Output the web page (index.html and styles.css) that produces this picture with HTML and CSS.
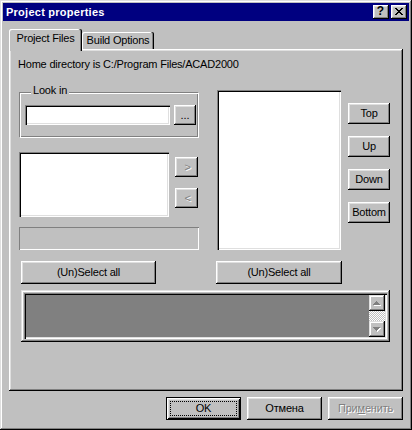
FILE: index.html
```html
<!DOCTYPE html>
<html lang="en">
<head>
<meta charset="utf-8">
<title>Project properties</title>
<link rel="stylesheet" href="styles.css">
</head>
<body>
<div class="window">
  <div class="titlebar">
    <span class="title">Project properties</span>
    <div class="caption-buttons">
      <span class="cap-btn help">?</span>
      <span class="cap-btn close">
        <svg width="8" height="7" viewBox="0 0 8 7" shape-rendering="crispEdges"><path fill="#000" d="M0 0h2v1H0zM6 0h2v1H6zM1 1h2v1H1zM5 1h2v1H5zM2 2h4v1H2zM3 3h2v1H3zM2 4h4v1H2zM1 5h2v1H1zM5 5h2v1H5zM0 6h2v1H0zM6 6h2v1H6z"/></svg>
      </span>
    </div>
  </div>

  <div class="body">
    <div class="tabs">
      <div class="tab active">Project Files</div>
      <div class="tab">Build Options</div>
    </div>

    <div class="panel">
      <div class="home">Home directory is C:/Program Files/ACAD2000</div>

      <div class="cols">
        <div class="col-left">
          <fieldset class="group">
            <legend>Look in</legend>
            <div class="look-row">
              <div class="field edit"></div>
              <button type="button" class="btn browse">...</button>
            </div>
          </fieldset>

          <div class="list-row">
            <div class="field list-left"></div>
            <div class="arrows">
              <button type="button" class="btn arrow disabled">&gt;</button>
              <button type="button" class="btn arrow disabled">&lt;</button>
            </div>
          </div>

          <div class="status"></div>

          <button type="button" class="btn select select-left">(Un)Select all</button>
        </div>

        <div class="col-right">
          <div class="list-wrap">
            <div class="field list-right"></div>
            <div class="order">
              <button type="button" class="btn order-btn">Top</button>
              <button type="button" class="btn order-btn">Up</button>
              <button type="button" class="btn order-btn">Down</button>
              <button type="button" class="btn order-btn">Bottom</button>
            </div>
          </div>
          <button type="button" class="btn select select-right">(Un)Select all</button>
        </div>
      </div>

      <div class="log">
        <div class="log-inner">
          <div class="scrollbar">
            <div class="sb-btn">
              <svg width="8" height="5" viewBox="0 0 8 5" shape-rendering="crispEdges">
                <path fill="#fff" d="M4 1h1v1h1v1h1v1h1v1H1V4h1V3h1V2h1z"/>
                <path fill="#808080" d="M3 0h1v1h1v1h1v1h1v1H0V3h1V2h1V1h1z"/>
              </svg>
            </div>
            <div class="sb-track"></div>
            <div class="sb-btn">
              <svg width="8" height="5" viewBox="0 0 8 5" shape-rendering="crispEdges">
                <path fill="#fff" d="M1 1h7v1H7v1H6v1H5v1H4V4H3V3H2V2H1z"/>
                <path fill="#808080" d="M0 0h7v1H6v1H5v1H4v1H3V3H2V2H1V1H0z"/>
              </svg>
            </div>
          </div>
        </div>
      </div>
    </div>

    <div class="actions">
      <button type="button" class="btn default"><span class="focus">OK</span></button>
      <button type="button" class="btn action">Отмена</button>
      <button type="button" class="btn action disabled">При<u>м</u>енить</button>
    </div>
  </div>
</div>
</body>
</html>
```

FILE: styles.css
```css
* {
  box-sizing: border-box;
}

html,
body {
  margin: 0;
  padding: 0;
}

body {
  background: #c0c0c0;
  font-family: "Liberation Sans", Arial, sans-serif;
  font-size: 11px;
  line-height: 13px;
  letter-spacing: -0.2px;
  color: #000;
}

.window {
  width: 412px;
  height: 430px;
  padding: 3px;
  background: #c0c0c0;
  display: flex;
  flex-direction: column;
  box-shadow:
    inset -1px -1px #000,
    inset 1px 1px #dfdfdf,
    inset -2px -2px #808080,
    inset 2px 2px #fff;
}

/* ---------- title bar ---------- */
.titlebar {
  height: 18px;
  flex: none;
  background: #000080;
  color: #fff;
  display: flex;
  align-items: center;
  justify-content: space-between;
  padding: 0 2px 0 3px;
}

.title {
  font-weight: bold;
  letter-spacing: 0.25px;
  line-height: 18px;
}

.caption-buttons {
  display: flex;
  gap: 2px;
}

.cap-btn {
  width: 16px;
  height: 14px;
  background: #c0c0c0;
  color: #000;
  display: flex;
  align-items: center;
  justify-content: center;
  padding: 0 1px 1px 0;
  box-shadow:
    inset -1px -1px #000,
    inset 1px 1px #fff,
    inset -2px -2px #808080,
    inset 2px 2px #dfdfdf;
}

.help {
  font-weight: bold;
  font-size: 12px;
  letter-spacing: 0;
}

.close svg {
  display: block;
}

/* ---------- body ---------- */
.body {
  flex: 1;
  display: flex;
  flex-direction: column;
  padding: 8px 6px 0;
}

.tabs {
  display: flex;
  align-items: flex-end;
  height: 20px;
  flex: none;
  position: relative;
  z-index: 1;
}

.tab {
  height: 17px;
  width: 72px;
  padding-top: 2px;
  text-align: center;
  background: #c0c0c0;
  border-radius: 2px 2px 0 0;
  box-shadow:
    inset -1px 0 #000,
    inset -2px 0 #808080,
    inset 1px 1px #fff;
}

.tab.active {
  height: 22px;
  width: 73px;
  padding-top: 3px;
  margin-bottom: -2px;
  position: relative;
}

.panel {
  height: 342px;
  flex: none;
  padding: 9px 0 0 10px;
  display: flex;
  flex-direction: column;
  box-shadow:
    inset -1px -1px #000,
    inset 1px 1px #fff,
    inset -2px -2px #808080,
    inset 2px 2px #dfdfdf;
}

.home {
  margin-left: -1px;
}

.cols {
  display: flex;
  align-items: flex-start;
  margin-top: 13px;
}

.col-left {
  width: 180px;
  display: flex;
  flex-direction: column;
  align-items: flex-start;
}

/* group box */
.group {
  width: 180px;
  min-width: 0;
  margin: 0;
  padding: 4px 0 12px 5px;
  border: 1px solid;
  border-color: #808080 #fff #fff #808080;
  box-shadow:
    inset 1px 1px #fff,
    inset -1px -1px #808080;
}

.group legend {
  margin-left: 6px;
  padding: 0 2px 4px;
  line-height: 13px;
  background: #c0c0c0;
}

.look-row {
  display: flex;
  gap: 4px;
}

.field {
  background: #fff;
  box-shadow:
    inset 1px 1px #808080,
    inset 2px 2px #000,
    inset -1px -1px #fff,
    inset -2px -2px #dfdfdf;
}

.edit {
  width: 145px;
  height: 20px;
}

/* buttons */
.btn {
  margin: 0;
  padding: 0;
  border: 0;
  font: inherit;
  letter-spacing: inherit;
  color: #000;
  background: #c0c0c0;
  display: flex;
  align-items: center;
  justify-content: center;
  box-shadow:
    inset -1px -1px #000,
    inset 1px 1px #fff,
    inset -2px -2px #808080,
    inset 2px 2px #dfdfdf;
}

.btn.disabled {
  color: #808080;
  text-shadow: 1px 1px 0 #fff;
}

.browse {
  width: 22px;
  height: 20px;
  letter-spacing: 0;
}

.list-row {
  display: flex;
  margin-top: 14px;
}

.list-left {
  width: 150px;
  height: 65px;
}

.arrows {
  display: flex;
  flex-direction: column;
  gap: 11px;
  margin-left: 6px;
  padding-top: 5px;
}

.arrow {
  width: 23px;
  height: 20px;
  padding-left: 2px;
}

.status {
  width: 180px;
  height: 23px;
  margin-top: 10px;
  box-shadow:
    inset 1px 1px #808080,
    inset -1px -1px #fff;
}

.select {
  height: 23px;
  margin-top: 11px;
}

.select-left {
  width: 135px;
  margin-left: 2px;
}

.col-right {
  margin-left: 17px;
  padding-top: 6px;
  display: flex;
  flex-direction: column;
}

.list-wrap {
  display: flex;
}

.list-right {
  width: 124px;
  height: 160px;
  margin-left: 1px;
}

.order {
  display: flex;
  flex-direction: column;
  gap: 12px;
  margin-left: 7px;
  padding-top: 13px;
}

.order-btn {
  width: 42px;
  height: 21px;
}

.select-right {
  width: 126px;
}

/* disabled log box */
.log {
  width: 369px;
  height: 52px;
  margin: 6px 0 0 2px;
  padding: 3px;
  box-shadow:
    inset -1px -1px #000,
    inset 1px 1px #dfdfdf,
    inset -2px -2px #808080,
    inset 2px 2px #fff;
}

.log-inner {
  height: 100%;
  background: #808080;
  display: flex;
  justify-content: flex-end;
  padding: 2px;
  box-shadow:
    inset 1px 1px #808080,
    inset 2px 2px #000,
    inset -1px -1px #fff,
    inset -2px -2px #dfdfdf;
}

.scrollbar {
  width: 16px;
  display: flex;
  flex-direction: column;
}

.sb-btn {
  width: 16px;
  height: 16px;
  flex: none;
  background: #c0c0c0;
  display: flex;
  align-items: center;
  justify-content: center;
  box-shadow:
    inset -1px -1px #000,
    inset 1px 1px #dfdfdf,
    inset -2px -2px #808080,
    inset 2px 2px #fff;
}

.sb-btn svg {
  display: block;
}

.sb-track {
  flex: 1;
  background: repeating-conic-gradient(#c0c0c0 0 25%, #fff 0 50%) 0 0 / 2px 2px;
}

/* dialog buttons */
.actions {
  display: flex;
  justify-content: flex-end;
  gap: 6px;
  margin-top: 6px;
}

.action,
.default {
  width: 75px;
  height: 23px;
}

.default {
  padding: 4px;
  align-items: stretch;
  box-shadow:
    inset 1px 1px #000,
    inset -1px -1px #000,
    inset 2px 2px #fff,
    inset -2px -2px #000,
    inset 3px 3px #dfdfdf,
    inset -3px -3px #808080;
}

.focus {
  flex: 1;
  display: flex;
  align-items: center;
  justify-content: center;
  border: 1px dotted #000;
}

.action u {
  text-decoration-thickness: 1px;
}
```
